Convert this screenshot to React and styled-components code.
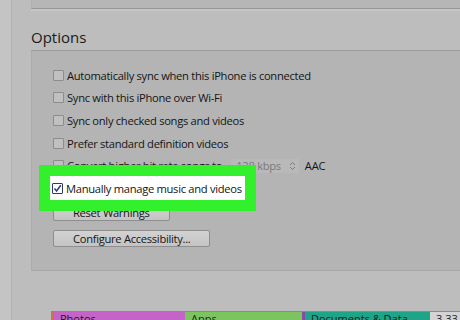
import React from 'react';
import styled, { createGlobalStyle } from 'styled-components';

const GlobalStyle = createGlobalStyle`
  html, body {
    margin: 0;
    padding: 0;
    background: #bdbdbd;
  }
  body {
    font-family: "Open Sans", "Noto Sans", sans-serif;
    color: #141414;
  }
`;

const Screen = styled.div`
  width: 460px;
  height: 320px;
  overflow: hidden;
  display: flex;
  background: #bdbdbd;
`;

const Sidebar = styled.div`
  width: 11px;
  flex: none;
  background: #c4c4c4;
  border-right: 1px solid #b2b2b2;
`;

const Main = styled.div`
  flex: 1;
  display: flex;
  flex-direction: column;
  padding-left: 19px;
  margin-right: -3px;
`;

const TopPanel = styled.div`
  flex: none;
  height: 8px;
  background: #b6b6b6;
  border-bottom: 1px solid #969696;
  box-shadow: 0 2px 0 #c6c6c6;
  border-left: 1px solid #b0b0b0;
`;

const Heading = styled.h2`
  flex: none;
  margin: 17px 0 2px 0;
  height: 22px;
  font-size: 15px;
  line-height: 22px;
  font-weight: 400;
  color: #1a1a1a;
`;

const Panel = styled.div`
  flex: none;
  height: 206px;
  padding: 13px 0 0 21px;
  background: #b4b4b4;
  border-top: 1px solid #9c9c9c;
  border-left: 1px solid #acacac;
  border-bottom: 1px solid #a6a6a6;
  display: flex;
  flex-direction: column;
  align-items: flex-start;
`;

const Row = styled.label`
  display: flex;
  align-items: center;
  height: 22.6px;
  font-size: 11.2px;
  letter-spacing: -0.3px;
  white-space: nowrap;
`;

const Box = styled.span`
  width: 9px;
  height: 9px;
  flex: none;
  margin-right: 3px;
  border: 1px solid ${(p) => (p.$checked ? '#2b3a66' : '#8c8c8c')};
  background: ${(p) => (p.$checked ? '#ffffff' : '#c0c0c0')};
  border-radius: 1px;
  display: flex;
  align-items: center;
  justify-content: center;
`;

const Highlighted = styled(Row)`
  position: relative;
  z-index: 1;
  height: 24px;
  margin: -0.7px 0 -0.7px -3px;
  padding: 0 3px 0 2px;
  background: #ffffff;
  box-shadow: 0 0 0 11px #33f02d;
`;

const Select = styled.span`
  display: flex;
  align-items: center;
  margin-left: 9px;
  padding: 0 3px 0 5px;
  height: 14px;
  background: #b9b9b9;
  color: #7a7a7a;
`;

const Stepper = styled.span`
  display: flex;
  margin-left: 8px;
`;

const Format = styled.span`
  margin-left: 6px;
`;

const Button = styled.button`
  flex: none;
  height: 17px;
  padding: 0 19px;
  margin-top: ${(p) => p.$gap}px;
  font-family: inherit;
  font-size: 11.2px;
  letter-spacing: -0.3px;
  line-height: 15px;
  color: #141414;
  background: linear-gradient(#d2d2d2, #c4c4c4);
  border: 1px solid #8e8e8e;
  border-radius: 2px;
`;

const Storage = styled.div`
  flex: none;
  display: flex;
  height: 10px;
  margin: 40px 0 0 20px;
  font-size: 11px;
  line-height: 14px;
  border-top: 1px solid #8a8a8a;
`;

const Segment = styled.div`
  width: ${(p) => p.$w}px;
  flex: none;
  padding-left: ${(p) => (p.$w > 10 ? 6 : 0)}px;
  box-sizing: border-box;
  background: ${(p) => p.$color};
  color: #1a1a1a;
  white-space: nowrap;
  overflow: hidden;
`;

const CheckMark = () => (
  <svg width="9" height="9" viewBox="0 0 9 9">
    <path d="M1.5 4.5 L3.6 7 L7.8 1.2" fill="none" stroke="#2a3f8c" strokeWidth="1.6" />
  </svg>
);

const StepIcon = () => (
  <svg width="7" height="10" viewBox="0 0 7 10">
    <path d="M1 4 L3.5 1.5 L6 4 M1 6 L3.5 8.5 L6 6" fill="none" stroke="#7a7a7a" strokeWidth="1" />
  </svg>
);

const options = [
  'Automatically sync when this iPhone is connected',
  'Sync with this iPhone over Wi-Fi',
  'Sync only checked songs and videos',
  'Prefer standard definition videos',
];

const segments = [
  { w: 3, color: '#d0743e' },
  { w: 131, color: '#c464c8', label: 'Photos' },
  { w: 117, color: '#7cc460', label: 'Apps' },
  { w: 3, color: '#8a48a8' },
  { w: 125, color: '#1ea487', label: 'Documents & Data' },
  { w: 40, color: '#d4d4d4', label: '3.33 GB Free' },
];

export default function App() {
  return (
    <Screen>
      <GlobalStyle />
      <Sidebar />
      <Main>
        <TopPanel />
        <Heading>Options</Heading>
        <Panel>
          {options.map((text) => (
            <Row key={text}>
              <Box />
              {text}
            </Row>
          ))}
          <Row>
            <Box />
            Convert higher bit rate songs to
            <Select>
              128 kbps
              <Stepper>
                <StepIcon />
              </Stepper>
            </Select>
            <Format>AAC</Format>
          </Row>
          <Highlighted>
            <Box $checked>
              <CheckMark />
            </Box>
            Manually manage music and videos
          </Highlighted>
          <Button $gap={4}>Reset Warnings</Button>
          <Button $gap={9}>Configure Accessibility...</Button>
        </Panel>
        <Storage>
          {segments.map((s, i) => (
            <Segment key={i} $w={s.w} $color={s.color}>
              {s.label}
            </Segment>
          ))}
        </Storage>
      </Main>
    </Screen>
  );
}
